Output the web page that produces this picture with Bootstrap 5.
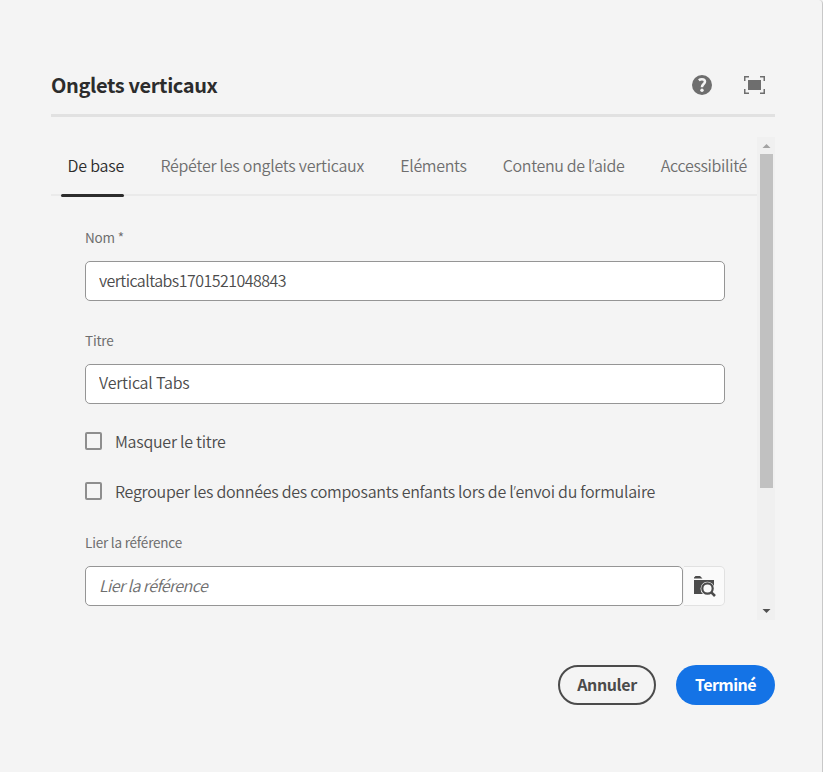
<!DOCTYPE html>
<html lang="fr">
<head>
<meta charset="utf-8">
<meta name="viewport" content="width=device-width, initial-scale=1">
<title>Onglets verticaux</title>
<link href="https://cdn.jsdelivr.net/npm/bootstrap@5.3.0/dist/css/bootstrap.min.css" rel="stylesheet">
<style>
body{font-family:"Noto Sans CJK SC","Noto Sans",sans-serif;background:#f4f4f4;color:#4b4b4b;font-size:16px;font-weight:350;letter-spacing:-.26px;line-height:24px;overflow:hidden}
.dialog-panel{height:772px;padding:66px 47px 0 51px;border-right:1px solid #c8c8c8;border-top-right-radius:4px;background:#f4f4f4}
.dialog-head{height:51px;border-bottom:3px solid #e1e1e1;padding:0 10px 11px 0}
.dialog-title{font-size:20px;line-height:28px;color:#2c2c2c;letter-spacing:-.37px}
.head-icons{gap:32px}
.scroll-area{height:483px;margin-top:20px}
.scroll-body{min-width:0}
.tab-strip{height:59px;padding:0 9px 0 16.5px;border-bottom:2px solid #eaeaea;gap:36.3px}
.tab-strip .nav-link{padding:16px 0 0;height:60px;color:#6e6e6e;white-space:nowrap;letter-spacing:-.35px}
.tab-strip .nav-link:nth-child(2){letter-spacing:-.25px}
.tab-strip .nav-link:nth-child(5){letter-spacing:-.31px}
.tab-strip .nav-link.active{color:#2c2c2c;position:relative;letter-spacing:-.2px}
.tab-strip .nav-link.active::after{content:"";position:absolute;left:-6.5px;right:0;bottom:0;height:3px;border-radius:2px;background:#2c2c2c}
.apos{font-family:"Open Sans",sans-serif}
.fields{padding:32px 32px 0 34px}
.fields .form-label{font-size:13.5px;font-weight:400;line-height:18px;letter-spacing:-.2px;margin:0 0 15px;color:#6e6e6e;display:block}
.fields .form-label.label-next{margin-top:30px}
.fields .form-control{height:40px;padding:0 13px 2px;font-size:16px;font-weight:350;line-height:24px;letter-spacing:-.2px;border:1px solid #959595;border-radius:5px;color:#4b4b4b;background:#fff}
.fields #nom{letter-spacing:-.54px}
.fields #titre{padding-bottom:4px}
.fields .form-control::placeholder{color:#6e6e6e;font-style:italic;opacity:1;letter-spacing:-.55px}
.fields .form-check-input{width:17px;height:18px;margin:0;float:none;border:2px solid #8e8e8e;border-radius:2px;background:#f5f5f5}
.check-row{gap:13px;height:24px}
.check-first{margin:25px 0 26px}
.browse-btn{width:41px;height:40px;border:1px solid #e1e1e1;border-left:0;border-radius:0 5px 5px 0;background:#fafafa;margin-left:1px;padding:0 0 0 1px}
.scroll-track{width:18px;background:#f0f0f0}
.scroll-thumb{width:13px;height:334px;background:#c1c1c1;margin-left:3px}
.dialog-foot{padding-top:45px;gap:20px}
.pill{height:40px;padding:0 0 2px;font-size:16px;line-height:20px;font-weight:700;letter-spacing:-.4px}
.pill-cancel{width:98px;border:2px solid #4b4b4b;color:#4b4b4b}
.pill-done{width:99px;background:#1473e6;color:#fff;border:0;letter-spacing:-.55px}
</style>
<script src="https://cdn.jsdelivr.net/npm/bootstrap@5.3.0/dist/js/bootstrap.bundle.min.js"></script>
</head>
<body>
<main class="dialog-panel">
  <header class="dialog-head d-flex align-items-center justify-content-between">
    <h1 class="dialog-title fw-bold m-0">Onglets verticaux</h1>
    <div class="head-icons d-flex align-items-center">
      <svg width="20" height="20" viewBox="0 0 20 20" role="img" aria-label="Aide"><circle cx="10" cy="10" r="10" fill="#6e6e6e"/><path d="M6.800 5.300C7.800 4.500 8.800 4.200 9.900 4.200C11.800 4.200 13 5.200 13 6.800C13 9 9.900 9.200 9.900 12.200" fill="none" stroke="#f4f4f4" stroke-width="2.500"/><circle cx="10" cy="15.300" r="1.700" fill="#f4f4f4"/></svg>
      <svg width="21" height="18" viewBox="0 0 21 18" role="img" aria-label="Plein écran"><path d="M4 4H17V14H4Z" fill="#6e6e6e"/><path d="M.75 5V.75H5M16 .75H20.250V5M20.250 13V17.250H16M5 17.250H.75V13" fill="none" stroke="#6e6e6e" stroke-width="1.500"/></svg>
    </div>
  </header>
  <section class="scroll-area d-flex">
    <div class="scroll-body flex-grow-1">
      <nav class="nav tab-strip flex-nowrap">
        <a class="nav-link active" href="#">De base</a>
        <a class="nav-link" href="#">Répéter les onglets verticaux</a>
        <a class="nav-link" href="#">Eléments</a>
        <a class="nav-link" href="#">Contenu de l<span class="apos">’</span>aide</a>
        <a class="nav-link" href="#">Accessibilité</a>
      </nav>
      <form class="fields">
        <label class="form-label" for="nom">Nom *</label>
        <input class="form-control" id="nom" value="verticaltabs1701521048843">
        <label class="form-label label-next" for="titre">Titre</label>
        <input class="form-control" id="titre" value="Vertical Tabs">
        <div class="check-row check-first d-flex align-items-center"><input class="form-check-input" type="checkbox" id="masquer"><label for="masquer">Masquer le titre</label></div>
        <div class="check-row d-flex align-items-center"><input class="form-check-input" type="checkbox" id="grouper"><label class="text-nowrap" for="grouper">Regrouper les données des composants enfants lors de l<span class="apos">’</span>envoi du formulaire</label></div>
        <label class="form-label label-next" for="lier">Lier la référence</label>
        <div class="d-flex"><input class="form-control" id="lier" placeholder="Lier la référence">
          <button type="button" class="btn browse-btn d-flex align-items-center justify-content-center flex-shrink-0" aria-label="Parcourir"><svg width="22" height="21" viewBox="0 0 22 21"><path d="M0 2.500V1.500L1.500 0H6L8.500 2.500ZM0 4H20V10A7 7 0 1 0 9 18H0Z" fill="#4b4b4b"/><circle cx="13.500" cy="12.500" r="5.200" fill="#fafafa" stroke="#4b4b4b" stroke-width="2.200"/><path d="M17.300 16.300L21 20" stroke="#4b4b4b" stroke-width="2.600"/></svg></button>
        </div>
      </form>
    </div>
    <div class="scroll-track flex-shrink-0 d-flex flex-column justify-content-between">
      <div><svg class="d-block" width="18" height="17"><path d="M5.500 11L9.500 7L13.500 11Z" fill="#a3a3a3"/></svg><div class="scroll-thumb"></div></div>
      <svg class="d-block" width="18" height="17"><path d="M5.500 6L13.500 6L9.500 10Z" fill="#505050"/></svg>
    </div>
  </section>
  <footer class="dialog-foot d-flex justify-content-end">
    <button class="btn rounded-pill pill pill-cancel">Annuler</button>
    <button class="btn rounded-pill pill pill-done">Terminé</button>
  </footer>
</main>
</body>
</html>
